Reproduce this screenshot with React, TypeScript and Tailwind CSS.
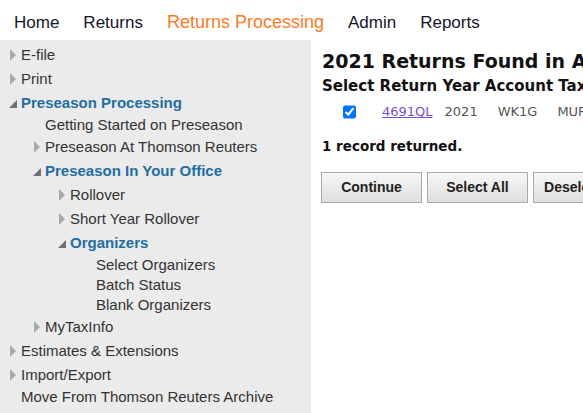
import React from 'react';

type Item = {
  label: string;
  level: number;
  kind: 'closed' | 'open' | 'leaf';
};

const items: Item[] = [
  { label: 'E-file', level: 0, kind: 'closed' },
  { label: 'Print', level: 0, kind: 'closed' },
  { label: 'Preseason Processing', level: 0, kind: 'open' },
  { label: 'Getting Started on Preseason', level: 1, kind: 'leaf' },
  { label: 'Preseason At Thomson Reuters', level: 1, kind: 'closed' },
  { label: 'Preseason In Your Office', level: 1, kind: 'open' },
  { label: 'Rollover', level: 2, kind: 'closed' },
  { label: 'Short Year Rollover', level: 2, kind: 'closed' },
  { label: 'Organizers', level: 2, kind: 'open' },
  { label: 'Select Organizers', level: 3, kind: 'leaf' },
  { label: 'Batch Status', level: 3, kind: 'leaf' },
  { label: 'Blank Organizers', level: 3, kind: 'leaf' },
  { label: 'MyTaxInfo', level: 1, kind: 'closed' },
  { label: 'Estimates & Extensions', level: 0, kind: 'closed' },
  { label: 'Import/Export', level: 0, kind: 'closed' },
  { label: 'Move From Thomson Reuters Archive', level: 0, kind: 'leaf' },
];

const indent = ['pl-[9px]', 'pl-[33px]', 'pl-[58px]', 'pl-[84px]'];

const TreeRow: React.FC<{ item: Item; last?: boolean }> = ({ item, last }) => {
  const tall = item.kind !== 'leaf' || (item.level === 0 && !last);
  return (
    <div className={`flex items-center ${tall ? 'h-6' : 'h-5'} ${indent[item.level]}`}>
      <span className="w-3 flex items-center shrink-0">
        {item.kind === 'closed' && (
          <span className="block w-0 h-0 border-l-[6px] border-l-[#a9a9a9] border-y-[6px] border-y-transparent ml-[1px]" />
        )}
        {item.kind === 'open' && (
          <svg width="10" height="10" viewBox="0 0 10 10" className="-ml-[1px] mt-[2px]">
            <polygon points="9,1 9,9 1,9" fill="#707070" />
          </svg>
        )}
      </span>
      <span
        className={
          item.kind === 'open'
            ? 'text-[15px] font-bold text-[#1f6ea6]'
            : 'text-[15px] text-[#333]'
        }
      >
        {item.label}
      </span>
    </div>
  );
};

const Btn: React.FC<{ label: string }> = ({ label }) => (
  <button className="w-[101px] h-[31px] shrink-0 border border-[#a9a9a9] bg-gradient-to-b from-[#f7f7f7] to-[#dedede] text-[14px] font-bold text-[#222] font-['Liberation_Sans',sans-serif]">
    {label}
  </button>
);

export default function App() {
  return (
    <div className="w-[583px] h-[413px] overflow-hidden bg-white font-['Liberation_Sans',Arial,sans-serif]">
      <nav className="h-10 flex items-center pt-[5px] text-[17px] text-[#15152a]">
        <span className="ml-[14px]">Home</span>
        <span className="ml-[24px]">Returns</span>
        <span className="ml-[24px] text-[18px] text-[#ff7a1f]">Returns Processing</span>
        <span className="ml-[24px]">Admin</span>
        <span className="ml-[24px]">Reports</span>
      </nav>
      <div className="flex h-[373px]">
        <aside className="w-[311px] shrink-0 bg-[#ebebeb] pt-[3px]">
          {items.map((it, i) => (
            <TreeRow key={it.label} item={it} last={i === items.length - 1} />
          ))}
        </aside>
        <main className="flex-1 pl-[11px] pt-[9px] whitespace-nowrap overflow-hidden font-['DejaVu_Sans',Verdana,sans-serif]">
          <h1 className="text-[19px] leading-[24px] font-bold text-[#111]">2021 Returns Found in Account</h1>
          <div className="mt-[4px] text-[15px] leading-[18px] font-bold text-[#111]">
            Select Return Year Account Taxpayer Name
          </div>
          <div className="flex items-center h-5 mt-[7px] text-[13px] text-[#555]">
            <input type="checkbox" defaultChecked className="ml-[21px] w-[14px] h-[14px] m-0 accent-[#0075ff]" />
            <a href="#" className="ml-[26px] text-[#7b4fc9] underline">4691QL</a>
            <span className="ml-[12px]">2021</span>
            <span className="ml-[20px]">WK1G</span>
            <span className="ml-[20px]">MURPHY</span>
          </div>
          <div className="mt-[15px] text-[13.5px] leading-[18px] font-bold text-[#111]">1 record returned.</div>
          <div className="flex gap-[5px] mt-[17px] -ml-[1px]">
            <Btn label="Continue" />
            <Btn label="Select All" />
            <Btn label="Deselect All" />
          </div>
        </main>
      </div>
    </div>
  );
}
